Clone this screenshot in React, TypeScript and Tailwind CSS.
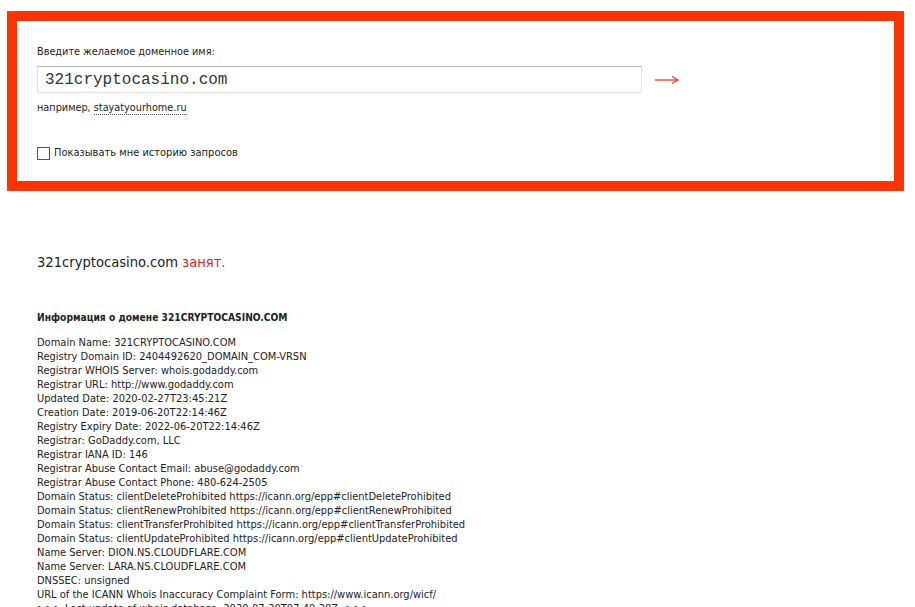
const whois = [
  "Domain Name: 321CRYPTOCASINO.COM",
  "Registry Domain ID: 2404492620_DOMAIN_COM-VRSN",
  "Registrar WHOIS Server: whois.godaddy.com",
  "Registrar URL: http://www.godaddy.com",
  "Updated Date: 2020-02-27T23:45:21Z",
  "Creation Date: 2019-06-20T22:14:46Z",
  "Registry Expiry Date: 2022-06-20T22:14:46Z",
  "Registrar: GoDaddy.com, LLC",
  "Registrar IANA ID: 146",
  "Registrar Abuse Contact Email: abuse@godaddy.com",
  "Registrar Abuse Contact Phone: 480-624-2505",
  "Domain Status: clientDeleteProhibited https://icann.org/epp#clientDeleteProhibited",
  "Domain Status: clientRenewProhibited https://icann.org/epp#clientRenewProhibited",
  "Domain Status: clientTransferProhibited https://icann.org/epp#clientTransferProhibited",
  "Domain Status: clientUpdateProhibited https://icann.org/epp#clientUpdateProhibited",
  "Name Server: DION.NS.CLOUDFLARE.COM",
  "Name Server: LARA.NS.CLOUDFLARE.COM",
  "DNSSEC: unsigned",
  "URL of the ICANN Whois Inaccuracy Complaint Form: https://www.icann.org/wicf/",
  ">>> Last update of whois database: 2020-07-20T07:49:38Z <<<",
];

export default function App() {
  return (
    <div className="min-h-screen bg-white text-[11px] leading-[14px] text-[#222] font-['DejaVu_Sans_Condensed','DejaVu_Sans',sans-serif]">
      <div className="pt-[11px] pl-[7px]">
        <div className="w-[897px] h-[180px] border-[10px] border-[#ff3300] pl-[20px] pt-[24px]">
          <div className="text-[10.8px]">Введите желаемое доменное имя:</div>
          <div className="mt-[7px] flex items-center">
            <div className="w-[605px] h-[27px] border border-[#e2e2e2] border-t-[#b5b5b5] flex items-center pl-[7px] text-[16px] text-[#333] font-['Liberation_Mono',monospace]">
              321cryptocasino.com
            </div>
            <svg className="ml-[13px]" width="24" height="10" viewBox="0 0 24 10">
              <line x1="0" y1="5" x2="22" y2="5" stroke="#e8453c" strokeWidth="1.4" />
              <path d="M17 1.5 L23 5 L17 8.5" fill="none" stroke="#e8453c" strokeWidth="1.4" />
            </svg>
          </div>
          <div className="mt-[8px] text-[10.8px]">
            например,{" "}
            <span className="border-b border-dotted border-[#555]">stayatyourhome.ru</span>
          </div>
          <label className="mt-[31px] flex items-center">
            <span className="w-[13px] h-[13px] border border-[#555] bg-white mr-[4px]" />
            Показывать мне историю запросов
          </label>
        </div>
      </div>

      <div className="pl-[37px]">
        <div className="mt-[61px] text-[14.6px] leading-[20px]">
          321cryptocasino.com <span className="text-[#e3201b]">занят.</span>
        </div>
        <div className="mt-[39px] font-bold text-[10.2px]">Информация о домене 321CRYPTOCASINO.COM</div>
        <div className="mt-[11px]">
          {whois.map((line) => (
            <div key={line} className="whitespace-nowrap">
              {line}
            </div>
          ))}
        </div>
      </div>
    </div>
  );
}
